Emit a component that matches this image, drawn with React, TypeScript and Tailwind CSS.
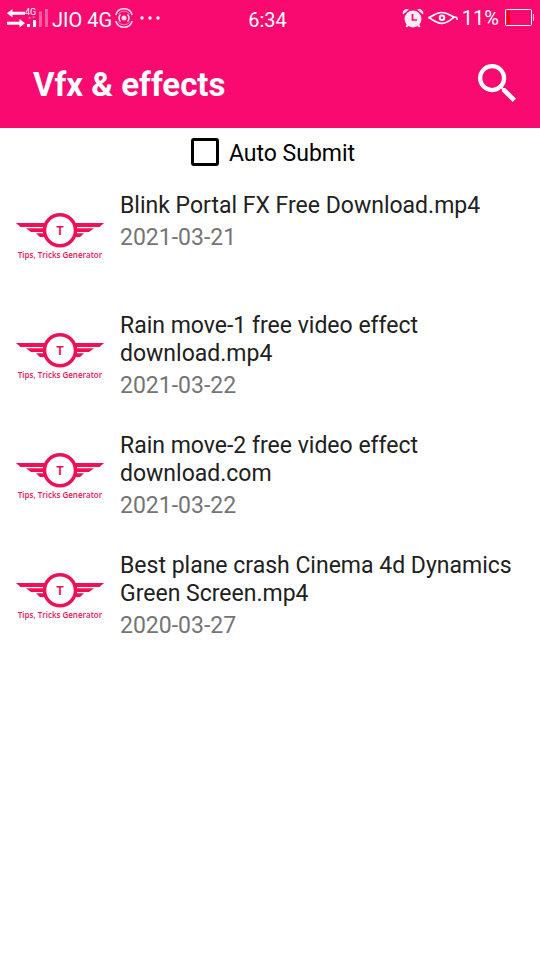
const videos = [
  { title: 'Blink Portal FX Free Download.mp4', date: '2021-03-21' },
  { title: 'Rain move-1 free video effect download.mp4', date: '2021-03-22' },
  { title: 'Rain move-2 free video effect download.com', date: '2021-03-22' },
  { title: 'Best plane crash Cinema 4d Dynamics Green Screen.mp4', date: '2020-03-27' },
];

function SignalIcon() {
  return (
    <svg viewBox="0 0 44 24" className="h-6 w-11" fill="white" aria-hidden="true">
      <path d="M0 5.300L5.500 1v2.800H18v3H5.500v2.800z" />
      <path d="M18 15.300L12.500 11v2.800H0v3h12.500v2.800z" />
      <text x="18" y="7" fontSize="9" fontFamily="Roboto, sans-serif">
        4G
      </text>
      <path d="M21 10.500l1.700-2 1.700 2zM25 8.500h3.400l-1.700 2z" opacity=".45" />
      <path d="M20 16h3v3h-3zM26 12h3v7h-3z" />
      <path d="M32 3.500h3V19h-3zM38 1h3v18h-3z" opacity=".35" />
    </svg>
  );
}

function HotspotIcon() {
  return (
    <svg viewBox="0 0 20 20" className="size-5" fill="none" stroke="white" strokeWidth="1.5" opacity=".85" aria-hidden="true">
      <circle cx="10" cy="10" r="2.500" fill="white" stroke="none" />
      <path d="M6.500 13.600a5 5 0 0 1 0-7.200M13.500 6.400a5 5 0 0 1 0 7.200" />
      <path d="M1.800 7a8.500 8.500 0 0 1 16.400 0M1.800 13a8.500 8.500 0 0 0 16.400 0" />
      <path d="M4.500 5.800a7 7 0 0 1 11 0M4.500 14.200a7 7 0 0 0 11 0" strokeWidth=".6" />
    </svg>
  );
}

function AlarmIcon() {
  return (
    <svg viewBox="0 0 22 20" className="h-5 w-[22px]" aria-hidden="true">
      <g fill="white" opacity=".92">
        <circle cx="11" cy="11" r="8.500" />
        <path d="M1 6.500C-.5 3 3.500-.5 7 1.500zM21 6.500C22.500 3 18.500-.5 15 1.500z" />
        <path d="M5 16l2 1.500L5 19.500l-1.500-1zM17 16l-2 1.500 2 2 1.500-1z" />
      </g>
      <path d="M10.500 6v6H15" fill="none" stroke="#f80a70" strokeWidth="1.700" />
    </svg>
  );
}

function EyeIcon() {
  return (
    <svg viewBox="0 0 30 16" className="h-4 w-[30px]" fill="none" stroke="white" strokeWidth="1.700" aria-hidden="true">
      <path d="M.5 7.700C4 7 7 2.500 14 2.500c6 0 9 4 12 4.500l2.500.5 1 2.500" />
      <path d="M.5 7.700C4 8.500 7 13.300 14 13.300c5.500 0 8.500-3.300 12-6.300" />
      <circle cx="14" cy="7.700" r="2.300" strokeWidth="2" />
    </svg>
  );
}

function BatteryIcon() {
  return (
    <svg viewBox="0 0 30 18" className="h-[18px] w-[30px]" aria-hidden="true">
      <rect x="1.500" y=".5" width="26" height="16" rx="1" fill="none" stroke="white" />
      <path d="M3 2h3v13H3z" fill="#f00" />
      <path d="M29.500 5v7" stroke="white" opacity=".8" />
    </svg>
  );
}

function StatusBar() {
  return (
    <div className="grid h-10 grid-cols-[1fr_auto_1fr] items-center pl-[7px] pr-3 text-xl text-white">
      <div className="flex items-center">
        <SignalIcon />
        <span className="ml-px">JIO 4G</span>
        <span className="ml-0.5 flex items-center gap-1.5 pb-1">
          <HotspotIcon />
          <svg viewBox="0 0 20 4" className="h-1 w-5" fill="white" aria-hidden="true">
            <circle cx="2" cy="2" r="1.700" />
            <circle cx="10" cy="2" r="1.700" />
            <circle cx="18" cy="2" r="1.700" />
          </svg>
        </span>
      </div>
      <span>6:34</span>
      <div className="-mr-1.5 flex items-center justify-end gap-1 pb-1">
        <AlarmIcon />
        <EyeIcon />
        <span className="pr-px">11%</span>
        <BatteryIcon />
      </div>
    </div>
  );
}

function ChannelLogo() {
  return (
    <svg viewBox="0 0 120 120" className="size-[120px] shrink-0" fill="#ee1155" aria-hidden="true">
      <circle cx="60" cy="54.300" r="15.500" fill="none" stroke="#ee1155" strokeWidth="3.500" />
      <path d="M16 47h29l-1 4H20.500zM104 47H75l1 4h23.500z" />
      <path d="M26 52.200h18V56H31zM94 52.200H76V56h13z" />
      <path d="M36 57.200h8l2 3.800h-6zM84 57.200h-8L74 61h6z" />
      <text x="60" y="58.500" fontSize="12" fontWeight="700" textAnchor="middle" fontFamily="Roboto, sans-serif">
        T
      </text>
      <text x="60" y="82" fontSize="8" fontWeight="600" textAnchor="middle" fontFamily="'Open Sans', sans-serif">
        Tips, Tricks Generator
      </text>
    </svg>
  );
}

export default function App() {
  return (
    <div className="min-h-screen bg-white font-['Roboto',sans-serif]">
      <header className="bg-[#f80a70]">
        <StatusBar />
        <div className="flex h-[88px] items-center justify-between pl-[33px] pr-6">
          <h1 className="pt-0.5 text-[33px] font-bold text-white">Vfx &amp; effects</h1>
          <button type="button" aria-label="Search" className="pb-0.5">
            <svg viewBox="3 3 17.500 17.500" className="size-[38px]" fill="white" aria-hidden="true">
              <path d="M15.500 14h-.79l-.28-.27A6.471 6.471 0 0 0 16 9.500 6.500 6.500 0 1 0 9.500 16c1.610 0 3.090-.59 4.230-1.570l.27.28v.79l5 4.990L20.490 19l-4.990-5zm-6 0C7.010 14 5 11.990 5 9.500S7.010 5 9.500 5 14 7.010 14 9.500 11.990 14 9.500 14z" />
            </svg>
          </button>
        </div>
      </header>
      <main>
        <label className="flex h-12 items-center justify-center gap-2.5 pl-1.5 text-[23px] text-black">
          <input
            type="checkbox"
            className="size-7 appearance-none rounded-[3px] border-3 border-black checked:bg-black"
          />
          <span className="pt-1">Auto Submit</span>
        </label>
        <ul>
          {videos.map((video) => (
            <li key={video.title} className="flex min-h-[120px]">
              <ChannelLogo />
              <div className="flex flex-col gap-1 pr-4 pt-4 text-[23px] leading-7">
                <h2 className="text-[#212121]">{video.title}</h2>
                <p className="text-[#757575]">{video.date}</p>
              </div>
            </li>
          ))}
        </ul>
      </main>
    </div>
  );
}
